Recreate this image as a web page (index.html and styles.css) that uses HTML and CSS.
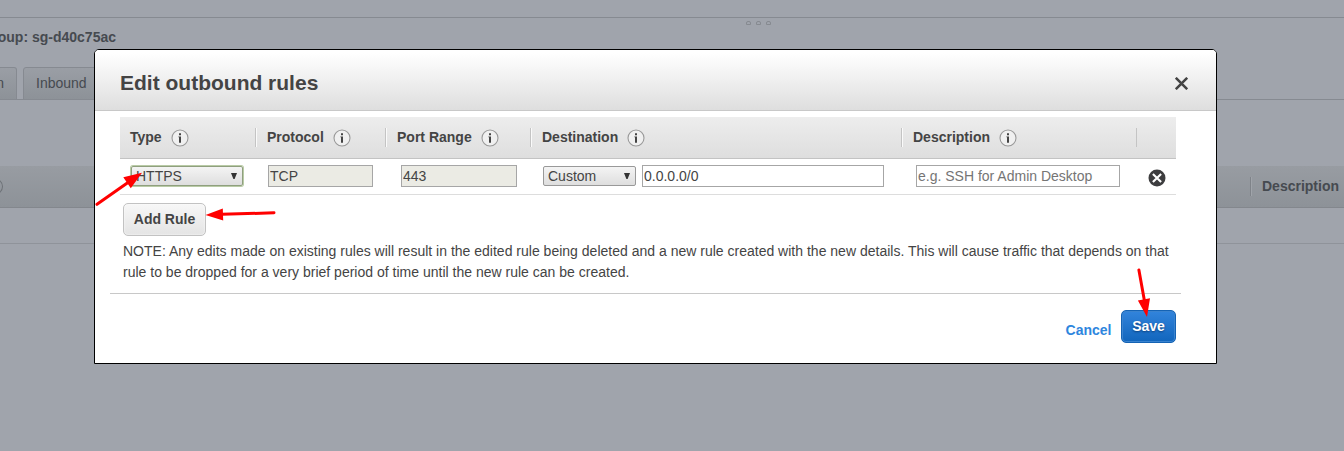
FILE: index.html
```html
<!DOCTYPE html>
<html lang="en">
<head>
<meta charset="utf-8">
<title>Edit outbound rules</title>
<link rel="stylesheet" href="styles.css">
</head>
<body>
<svg width="0" height="0" class="defs">
  <symbol id="info" viewBox="0 0 18 18">
    <circle cx="9" cy="9" r="8" fill="#f0f0f0" stroke="#999" stroke-width="1.1"/>
    <path d="M8 4.2h2v2H8zM7.4 7.4H10v6.4H8V8.3h-.6z" fill="#444"/>
  </symbol>
</svg>
<main class="page">
  <div class="top-pane"></div>
  <div class="splitter"><i></i><i></i><i></i></div>
  <div class="group-name"><span>oup: sg-d40c75ac</span></div>
  <nav class="tabs"><span class="tab tab-first">n</span><span class="tab">Inbound</span></nav>
  <div class="grid-head">
    <span class="cut-icon"></span>
    <span class="grid-col">Description</span>
  </div>
  <div class="grid-row"></div>
</main>

<section class="dialog">
  <header class="dialog-head">
    <h1>Edit outbound rules</h1>
    <svg class="close" viewBox="0 0 13 13"><path d="M.8 .8l11.4 11.4M12.2 .8L.8 12.2" stroke="#444" stroke-width="2.5"/></svg>
  </header>
  <div class="rules">
    <div class="cols head">
      <div class="th first">Type<svg class="info"><use href="#info"/></svg></div>
      <div class="th">Protocol<svg class="info"><use href="#info"/></svg></div>
      <div class="th">Port Range<svg class="info"><use href="#info"/></svg></div>
      <div class="th">Destination<svg class="info"><use href="#info"/></svg></div>
      <div class="th">Description<svg class="info"><use href="#info"/></svg></div>
      <div class="th last"></div>
    </div>
    <div class="cols row">
      <div class="td type"><div class="select focus">HTTPS<b></b></div></div>
      <div class="td protocol"><input class="field off" value="TCP" readonly></div>
      <div class="td port"><input class="field off" value="443" readonly></div>
      <div class="td dest"><div class="select">Custom<b></b></div><input class="field" value="0.0.0.0/0"></div>
      <div class="td desc"><input class="field" placeholder="e.g. SSH for Admin Desktop"></div>
      <div class="td remove"><svg viewBox="0 0 18 18"><circle cx="9" cy="9" r="8.5" fill="#3d3d3f"/><path d="M4.9 4.9l8.2 8.2M13.1 4.9l-8.2 8.2" stroke="#fff" stroke-width="2.1"/></svg></div>
    </div>
  </div>
  <button class="btn add">Add Rule</button>
  <p class="note">NOTE: Any edits made on existing rules will result in the edited rule being deleted and a new rule created with the new details. This will cause traffic that depends on that<br>rule to be dropped for a very brief period of time until the new rule can be created.</p>
  <footer class="actions">
    <a class="cancel">Cancel</a>
    <button class="btn save">Save</button>
  </footer>
</section>

<svg class="arrows" viewBox="0 0 1344 451">
  <g stroke="#f00" stroke-width="3" stroke-linecap="round" fill="#f00">
    <path d="M97 204.3L128 182.5M274 212.8L222 214.3M1138.9 270L1144.3 300"/>
    <path stroke="none" d="M142 172.8L123.3 177.3L130.8 188.3zM205.5 215L222.8 208.5L223.2 220.4zM1147 317L1137.9 300.4L1150 298.2z"/>
  </g>
</svg>
</body>
</html>
```
FILE: styles.css
```css
* { box-sizing: border-box; }
body { margin: 0; width: 1344px; height: 451px; overflow: hidden; position: relative; background: #a0a4ac; color: #444; font: 14px/21px "Liberation Sans", Arial, sans-serif; }
.defs { position: absolute; }
.page { display: flex; flex-direction: column; color: #464a50; }
.top-pane { height: 18px; border-bottom: 1px solid #868a91; }
.splitter { height: 9px; padding: 3px 0 0 746px; display: flex; gap: 5px; }
.splitter i { width: 5px; height: 4px; border: 1px solid #868a90; border-bottom-color: #868a90; border-radius: 2px 2px 0 0; }
.group-name { height: 40px; width: 116px; display: flex; justify-content: flex-end; white-space: nowrap; font-weight: bold; }
.tabs { height: 33px; border-bottom: 1px solid #868a91; display: flex; gap: 6px; }
.tab { height: 33px; border: 1px solid #868a91; border-radius: 3px 3px 0 0; padding: 5px 12px; background: linear-gradient(#9a9ea5, #8d9298); }
.tab-first { width: 17px; padding: 5px 12px 0 0; border-left: 0; border-top-left-radius: 0; display: flex; justify-content: flex-end; }
.grid-head { margin-top: 66px; height: 42px; border-bottom: 1px solid #83878d; background: linear-gradient(#989ca2, #8d9298); display: flex; justify-content: space-between; align-items: center; font-weight: bold; overflow: hidden; }
.cut-icon { width: 18px; height: 17px; margin-left: -15px; border: 1px solid #6d7177; border-radius: 50%; }
.grid-col { width: 94px; height: 19px; line-height: 19px; border-left: 1px solid #7f8389; box-shadow: inset 1px 0 #a0a4aa; padding-left: 11px; }
.grid-row { height: 36px; border-bottom: 1px solid #8f939a; }

.dialog { position: absolute; left: 94px; top: 49px; width: 1123px; height: 315px; border: 1px solid #000; border-radius: 5px 5px 0 0; background: #fff; overflow: hidden; }
.dialog-head { height: 61px; border-bottom: 1px solid #c8c8c8; background: linear-gradient(#fff 5%, #dedede); display: flex; justify-content: space-between; align-items: center; padding: 5px 28px 0 25px; }
h1 { margin: 0; font-size: 21px; line-height: 24px; }
.close { width: 13px; height: 13px; margin-top: 2px; }
.rules { width: 1056px; margin: 6px 0 0 25px; }
.cols { display: grid; grid-template-columns: 135px 130px 145px 371px 235px 40px; }
.head { height: 42px; align-items: center; background: linear-gradient(#ededed, #dedede); border-bottom: 1px solid #c3c3c3; font-weight: bold; }
.th { height: 19px; display: flex; align-items: center; border-left: 1px solid #c4c4c4; box-shadow: inset 1px 0 #fafafa; padding-left: 11px; }
.th.first { border: 0; box-shadow: none; padding-left: 10px; }
.th.last { box-shadow: none; }
.info { width: 18px; height: 18px; margin-left: 9px; }
.row { height: 36px; border-bottom: 1px solid #ddd; }
.td { display: flex; padding-top: 6px; }
.type { padding-left: 10px; }
.protocol { padding-left: 13px; }
.port { padding-left: 16px; }
.dest { padding-left: 13px; gap: 6px; }
.desc { padding-left: 15px; }
.remove { padding: 9.5px 0 0 11.5px; }
.remove svg { width: 18px; height: 18px; }
.field { width: 105px; height: 22px; border: 1px solid #a6a6a6; padding: 0 1px; font: inherit; color: #444; background: #fff; }
.off { background: #ebebe4; }
.port .field { width: 116px; }
.dest .field { width: 242px; }
.desc .field { width: 204px; }
.field::placeholder { color: #757575; opacity: 1; }
.select { width: 93px; height: 20px; margin-top: 1px; border: 1px solid #999; border-radius: 2px; background: linear-gradient(#f4f4f4, #dedede); padding: 0 5px 0 4px; line-height: 18px; display: flex; justify-content: space-between; }
.select b { width: 6px; height: 6px; margin-top: 6px; background: #333; clip-path: polygon(0 0, 100% 0, 60% 100%, 40% 100%); }
.focus { width: 112px; margin-left: 1px; border-color: #8f9f7e; box-shadow: 0 0 0 1px #b9cba6; }
.btn { display: block; font: bold 14px/21px "Liberation Sans", Arial, sans-serif; height: 33px; border-radius: 5px; padding: 0 0 1px; }
.add { width: 83px; margin: 8px 0 0 28px; border: 1px solid #c2c2c2; background: linear-gradient(#f7f7f7, #e4e4e4); color: #444; box-shadow: inset 0 0 2px #fff; }
.note { margin: 5px 0 0 28px; white-space: nowrap; letter-spacing: .006px; }
.actions { width: 1071px; margin: 10px 0 0 15px; padding: 16px 5px 0 0; border-top: 1px solid #c8c8c8; display: flex; justify-content: flex-end; gap: 9.5px; }
.cancel { color: #2e86de; font-weight: bold; padding-top: 10px; }
.save { width: 55px; color: #fff; border: 1px solid #1563b4; background: linear-gradient(#3284dc, #1165bc); box-shadow: inset 0 0 0 1px #3a83cf; text-shadow: 0 1px 2px #0b3f7c; }
.arrows { position: absolute; left: 0; top: 0; width: 1344px; height: 451px; pointer-events: none; }
```
